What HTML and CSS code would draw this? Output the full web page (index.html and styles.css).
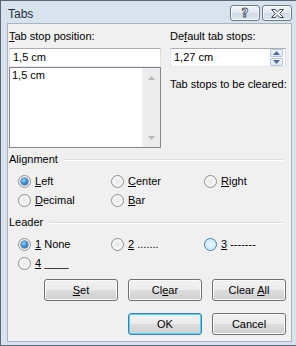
FILE: index.html
```html
<!DOCTYPE html>
<html>
<head>
<meta charset="utf-8">
<link rel="stylesheet" href="styles.css">
</head>
<body>
<div class="window">
  <div class="titlebar">
    <span class="title">Tabs</span>
    <div class="tbtns">
      <div class="tb help"><span>?</span></div>
      <div class="tb close">
        <svg width="15" height="11" viewBox="0 0 15 11"><path d="M1.5 1.5h3.5l2.5 2.3 2.5-2.3h3.5l-4 4 4 4h-3.5l-2.5-2.3-2.5 2.3h-3.5l4-4z" fill="#fff" stroke="#3b4656" stroke-width="1" stroke-linejoin="round"/></svg>
      </div>
    </div>
  </div>
  <div class="client">
    <div class="top">
      <div class="col-left">
        <div class="lbl"><u>T</u>ab stop position:</div>
        <div class="input">1,5 cm</div>
        <div class="listbox">
          <div class="items">1,5 cm</div>
          <div class="vscroll">
            <svg width="7" height="4" viewBox="0 0 7 4"><path d="M0 4h7L3.5 0z" fill="#b8b8b8"/></svg>
            <svg width="7" height="4" viewBox="0 0 7 4"><path d="M0 0h7L3.5 4z" fill="#b8b8b8"/></svg>
          </div>
        </div>
      </div>
      <div class="col-right">
        <div class="lbl">De<u>f</u>ault tab stops:</div>
        <div class="spin">
          <span class="spinval">1,27 cm</span>
          <div class="spinbtns">
            <div class="sb"><svg width="7" height="4" viewBox="0 0 7 4"><path d="M0 4h7L3.5 0z" fill="#4c6a9c"/></svg></div>
            <div class="sb"><svg width="7" height="4" viewBox="0 0 7 4"><path d="M0 0h7L3.5 4z" fill="#4c6a9c"/></svg></div>
          </div>
        </div>
        <div class="lbl clearlbl">Tab stops to be cleared:</div>
      </div>
    </div>

    <div class="group">
      <div class="ghead"><span>Alignment</span><i></i></div>
      <div class="radios">
        <div class="opt"><span class="radio on"></span><span><u>L</u>eft</span></div>
        <div class="opt"><span class="radio"></span><span><u>C</u>enter</span></div>
        <div class="opt"><span class="radio"></span><span><u>R</u>ight</span></div>
        <div class="opt"><span class="radio"></span><span><u>D</u>ecimal</span></div>
        <div class="opt"><span class="radio"></span><span><u>B</u>ar</span></div>
      </div>
    </div>

    <div class="group leader">
      <div class="ghead"><span>Leader</span><i></i></div>
      <div class="radios">
        <div class="opt"><span class="radio on"></span><span><u>1</u> None</span></div>
        <div class="opt"><span class="radio"></span><span><u>2</u> .......</span></div>
        <div class="opt"><span class="radio hover"></span><span><u>3</u> -------</span></div>
        <div class="opt"><span class="radio"></span><span><u>4</u> ____</span></div>
      </div>
    </div>

    <div class="btnrow">
      <div class="btn"><u>S</u>et</div>
      <div class="btn">Cl<u>e</u>ar</div>
      <div class="btn">Clear <u>A</u>ll</div>
    </div>
    <div class="btnrow second">
      <div class="btn def">OK</div>
      <div class="btn">Cancel</div>
    </div>
  </div>
</div>
</body>
</html>
```

FILE: styles.css
```css
html, body {
  margin: 0;
  padding: 0;
  background: #ffffff;
}
body {
  font-family: "Liberation Sans", Arial, sans-serif;
  font-size: 11px;
  color: #000;
}
u { text-decoration: underline; text-underline-offset: 1px; }

.window {
  width: 296px;
  height: 346px;
  box-sizing: border-box;
  border: 1px solid #5b6776;
  border-right: 0;
  background: #d9e3ee;
  display: flex;
  flex-direction: column;
  padding: 0 4px 3px 6px;
}

.titlebar {
  height: 22px;
  display: flex;
  align-items: flex-start;
  justify-content: space-between;
  flex: none;
}
.title {
  font-size: 12px;
  line-height: 15px;
  color: #1e2b3a;
  margin: 6px 0 0 1px;
}
.tbtns {
  display: flex;
  gap: 2px;
  margin-top: 4px;
  margin-right: 0;
}
.tb {
  width: 30px;
  height: 16px;
  box-sizing: border-box;
  border: 1px solid #6d7a8a;
  border-radius: 3px;
  background: linear-gradient(#f4f7fa, #dfe6ee 50%, #cfd9e4 51%, #dfe7ef);
  display: flex;
  align-items: center;
  justify-content: center;
  box-shadow: inset 0 0 0 1px rgba(255,255,255,0.7);
}
.help span {
  font-family: "DejaVu Sans", sans-serif;
  font-weight: bold;
  font-size: 12px;
  color: #fff;
  -webkit-text-stroke: 0.8px #3b4656;
  line-height: 12px;
}

.client {
  flex: 1;
  background: #f0f0f0;
  border: 1px solid #a7b4c3;
  padding: 5px 5px 0 1px;
  display: flex;
  flex-direction: column;
}

.top {
  display: flex;
  gap: 9px;
}
.col-left { width: 152px; }
.col-right { width: 116px; }
.lbl {
  line-height: 15px;
  height: 15px;
  margin-bottom: 4px;
  white-space: nowrap;
}
.input {
  height: 19px;
  box-sizing: border-box;
  border: 1px solid #abadb3;
  border-color: #abadb3 #dbdfe6 #e3e9ef #e2e3ea;
  background: #fff;
  padding: 1px 0 0 3px;
  line-height: 15px;
}
.listbox {
  height: 81px;
  box-sizing: border-box;
  border: 1px solid #828790;
  background: #fff;
  display: flex;
}
.items {
  flex: 1;
  padding: 0 0 0 2px;
  line-height: 15px;
}
.vscroll {
  width: 17px;
  background: #ececec;
  border-left: 1px solid #f5f5f5;
  display: flex;
  flex-direction: column;
  justify-content: space-between;
  align-items: center;
  padding: 8px 0 7px;
}
.spin {
  height: 19px;
  box-sizing: border-box;
  border: 1px solid #abadb3;
  border-color: #abadb3 #dbdfe6 #e3e9ef #e2e3ea;
  background: #fff;
  display: flex;
  justify-content: space-between;
}
.spinval {
  padding: 1px 0 0 3px;
  line-height: 15px;
}
.spinbtns {
  width: 13px;
  display: flex;
  flex-direction: column;
  gap: 1px;
  padding: 0 2px 0 0;
}
.sb {
  flex: 1;
  box-sizing: border-box;
  border: 1px solid #b5c3d6;
  border-radius: 1px;
  background: linear-gradient(#f3f6fb, #dfe7f2);
  display: flex;
  align-items: center;
  justify-content: center;
}
.clearlbl { margin-top: 10px; }

.group { margin-top: 4px; }
.ghead {
  display: flex;
  align-items: center;
  line-height: 15px;
  padding-left: 0;
}
.ghead i {
  flex: 1;
  height: 0;
  border-top: 1px solid #d5dfe5;
  border-bottom: 1px solid #fff;
  margin-left: 6px;
  margin-right: 3px;
}
.radios {
  display: grid;
  grid-template-columns: 93px 93px 80px;
  row-gap: 6px;
  padding: 8px 0 0 9px;
}
.opt {
  display: flex;
  align-items: center;
  gap: 4px;
  height: 13px;
  line-height: 13px;
}
.radio {
  width: 13px;
  height: 13px;
  box-sizing: border-box;
  border-radius: 50%;
  border: 1px solid #8f8f8f;
  background: radial-gradient(circle at 50% 50%, #e6e6e6 0, #f2f2f2 40%, #fbfbfb 70%, #dcdcdc 100%);
  box-shadow: inset 0 0 0 1px #f4f4f4;
  position: relative;
  flex: none;
}
.radio.on::after {
  content: "";
  position: absolute;
  left: 2px;
  top: 2px;
  width: 7px;
  height: 7px;
  border-radius: 50%;
  background: radial-gradient(circle at 40% 35%, #9fd4f9 0, #3b93d6 45%, #1a5590 100%);
  box-shadow: 0 0 0 0.5px #224f7e;
}
.radio.hover {
  border-color: #3c7fb1;
  background: radial-gradient(circle, #e8f6fd 0, #d8eefb 45%, #a8dbf7 75%, #7ec4ee 100%);
  box-shadow: inset 0 0 0 1px #def3fd;
}
.leader { margin-top: 8px; }

.btnrow {
  display: flex;
  justify-content: flex-end;
  gap: 10px;
  padding-right: 0;
  margin-top: 9px;
}
.btnrow.second { margin-top: 12px; }
.btn {
  width: 74px;
  height: 22px;
  box-sizing: border-box;
  border: 1px solid #707070;
  border-radius: 3px;
  background: linear-gradient(#f2f2f2, #ebebeb 50%, #dddddd 51%, #cfcfcf);
  box-shadow: inset 0 0 0 1px #fcfcfc;
  text-align: center;
  line-height: 20px;
}
.btn.def {
  border-color: #3c7fb1;
  box-shadow: inset 0 0 0 1px #48d8f8;
}
```
